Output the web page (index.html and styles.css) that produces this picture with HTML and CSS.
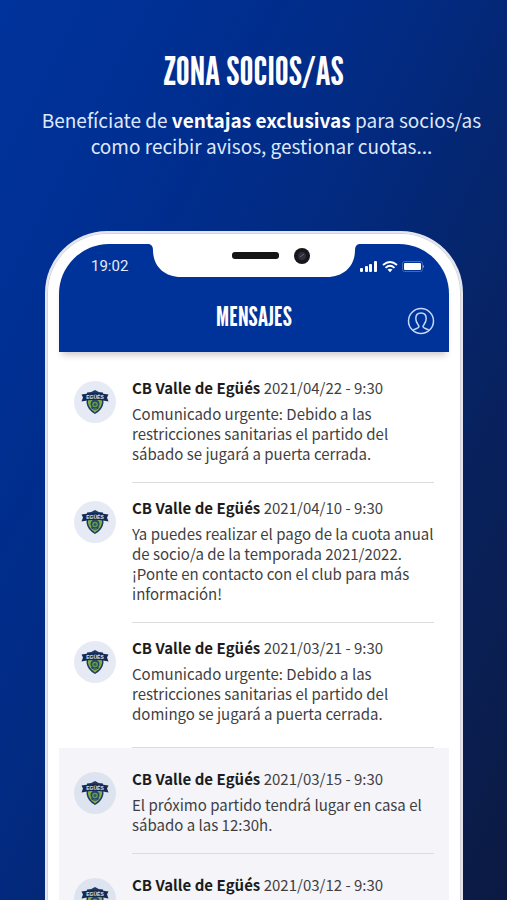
FILE: index.html
```html
<!DOCTYPE html>
<html lang="es">
<head>
    <meta charset="UTF-8">
    <meta name="viewport" content="width=device-width, initial-scale=1.0">
    <title>Zona Socios/as</title>
    <link rel="stylesheet" href="styles.css">
</head>
<body>
    <!-- Club crest, reused by every message -->
    <svg class="defs" aria-hidden="true">
        <symbol id="crest" viewBox="0 0 28 26">
            <path d="M6 3.5 Q10.5 3.5 14 1 Q17.500 3.500 22 3.500 L22.500 14 Q21.500 21 14 25 Q6.500 21 5.500 14 Z" fill="#1d3768"/>
            <path d="M7 11 H21 V14 Q20 19.500 14 23.500 Q8 19.500 7 14 Z" fill="#7fae45"/>
            <circle cx="14" cy="15" r="4.500" fill="#25466b"/>
            <circle cx="14" cy="15.500" r="2.800" fill="#6b9d50"/>
            <circle cx="14" cy="15.500" r="1.500" fill="#2f5a63"/>
            <path d="M10 18.500 Q14 22 18 18.500" stroke="#25466b" stroke-width="1" fill="none"/>
            <path d="M0.500 5.500 Q14 2.500 27.500 5.500 L26 8.500 L27.500 12.500 L22 11.500 Q14 10 6 11.500 L0.500 12.500 L2 8.500 Z" fill="#17294f"/>
            <text x="14" y="10" class="crest-text">EGÜÉS</text>
        </symbol>
    </svg>

    <section class="hero">
        <h1>ZONA SOCIOS/AS</h1>
        <p>Benefíciate de <strong>ventajas exclusivas</strong> para socios/as como recibir avisos, gestionar cuotas...</p>
    </section>

    <main class="phone">
        <div class="screen">
            <svg class="notch" viewBox="0 0 210 33" aria-hidden="true">
                <path d="M0 0 Q4 1 4 6 C4 22 15 33 32 33 H178 C195 33 206 22 206 6 Q206 1 210 0 Z" fill="#fff"/>
                <rect x="83" y="8" width="47" height="7" rx="3" fill="#141416"/>
                <circle cx="153" cy="12" r="8" fill="#17171b"/>
                <circle cx="153" cy="12" r="4" fill="#2c2e3a"/>
                <path d="M151 13 L155 10" stroke="#62697c" stroke-width="1"/>
            </svg>

            <header class="app-header">
                <div class="status-bar">
                    <span class="time">19:02</span>
                    <svg class="status-icons" viewBox="0 0 66 14" aria-hidden="true">
                        <g fill="#fff">
                            <rect x="1" y="9" width="3" height="4" rx="1"/>
                            <rect x="6" y="7" width="3" height="6" rx="1"/>
                            <rect x="10" y="5" width="3" height="8" rx="1"/>
                            <rect x="15" y="2" width="3" height="11" rx="1"/>
                            <path d="M28.500 10.500 L31 13.300 L33.500 10.500 Q31 8.900 28.500 10.500 Z"/>
                            <rect x="45" y="4" width="17" height="7" rx="1"/>
                            <path d="M64 6 Q66 7.500 64 9 Z" opacity="0.6"/>
                        </g>
                        <rect x="43.500" y="2.500" width="20" height="10" rx="2" fill="none" stroke="#4468b5" stroke-width="1"/>
                        <g fill="none" stroke="#fff" stroke-width="1.800">
                            <path d="M24 6 Q31 0 38 6"/>
                            <path d="M26.500 8.800 Q31 4.800 35.500 8.800"/>
                        </g>
                    </svg>
                </div>
                <div class="title-bar">
                    <h2>MENSAJES</h2>
                    <button class="profile-button" type="button" aria-label="Perfil">
                        <svg viewBox="0 0 28 28" aria-hidden="true">
                            <circle cx="14" cy="14" r="12.500"/>
                            <path d="M6 23.500 C7 21.500 12 21.800 12 19.500 C12 18 8.800 16.500 8.800 11.500 C8.800 7.800 11 6 14 6 C17 6 19.200 7.800 19.200 11.500 C19.200 16.500 16 18 16 19.500 C16 21.800 21 21.500 22 23.500"/>
                        </svg>
                    </button>
                </div>
            </header>

            <section class="messages">
                <article class="message">
                    <div class="avatar"><svg><use href="#crest"/></svg></div>
                    <div class="message-body">
                        <h3>CB Valle de Egüés <time>2021/04/22 - 9:30</time></h3>
                        <p>Comunicado urgente: Debido a las restricciones sanitarias el partido del sábado se jugará a puerta cerrada.</p>
                    </div>
                </article>
                <article class="message">
                    <div class="avatar"><svg><use href="#crest"/></svg></div>
                    <div class="message-body">
                        <h3>CB Valle de Egüés <time>2021/04/10 - 9:30</time></h3>
                        <p>Ya puedes realizar el pago de la cuota anual de socio/a de la temporada 2021/2022. ¡Ponte en contacto con el club para más información!</p>
                    </div>
                </article>
                <article class="message">
                    <div class="avatar"><svg><use href="#crest"/></svg></div>
                    <div class="message-body">
                        <h3>CB Valle de Egüés <time>2021/03/21 - 9:30</time></h3>
                        <p>Comunicado urgente: Debido a las restricciones sanitarias el partido del domingo se jugará a puerta cerrada.</p>
                    </div>
                </article>
            </section>

            <section class="messages read">
                <article class="message">
                    <div class="avatar"><svg><use href="#crest"/></svg></div>
                    <div class="message-body">
                        <h3>CB Valle de Egüés <time>2021/03/15 - 9:30</time></h3>
                        <p>El próximo partido tendrá lugar en casa el sábado a las 12:30h.</p>
                    </div>
                </article>
                <article class="message">
                    <div class="avatar"><svg><use href="#crest"/></svg></div>
                    <div class="message-body">
                        <h3>CB Valle de Egüés <time>2021/03/12 - 9:30</time></h3>
                    </div>
                </article>
            </section>
        </div>
    </main>
</body>
</html>
```

FILE: styles.css
```css
* {
    box-sizing: border-box;
}

body {
    margin: 0;
    height: 100vh;
    overflow: hidden;
    display: flex;
    flex-direction: column;
    background: linear-gradient(117deg, #00339c 0%, #002f92 22%, #022a80 45%, #08225f 72%, #0c1a42 100%);
    font-family: "Source Sans Pro", "Noto Sans CJK SC", sans-serif;
}

h1,
h2,
h3,
p {
    margin: 0;
}

h1,
h2 {
    font-family: "League Gothic", "Liberation Sans Narrow", "Roboto", sans-serif;
    font-weight: normal;
    color: #fff;
    white-space: nowrap;
}

.defs {
    display: none;
}

.hero {
    padding: 47px 20px 72px;
    text-align: center;
    color: #dfe8fb;
}

.hero h1 {
    font-size: 39px;
    line-height: 48px;
    margin-bottom: 12px;
}

.hero p {
    padding-left: 16px;
    font-size: 19px;
    line-height: 26px;
}

.hero strong {
    color: #fff;
}

.phone {
    flex: 1 0 auto;
    margin: 0 44px 0 45px;
    padding: 11px 12px 0;
    border: 2px solid #e4e5ee;
    border-bottom: 0;
    border-radius: 62px 62px 0 0;
    background: #fff;
    box-shadow: inset 0 0 0 1px #d3d4dc;
}

.screen {
    position: relative;
    border-radius: 50px 50px 0 0;
    background: #fff;
}

.notch {
    position: absolute;
    top: 0;
    left: 50%;
    width: 210px;
    height: 33px;
    transform: translateX(-50%);
}

.app-header {
    height: 108px;
    border-radius: 50px 50px 0 0;
    background: #003399;
    box-shadow: 0 6px 6px -3px rgba(60, 40, 60, 0.25);
}

.status-bar {
    display: flex;
    justify-content: space-between;
    align-items: center;
    height: 44px;
    padding: 0 24px 0 32px;
}

.time {
    font-family: Roboto, sans-serif;
    font-size: 15px;
    line-height: 20px;
    color: #e3ebfb;
}

.status-icons {
    width: 66px;
    height: 14px;
}

.title-bar {
    display: grid;
    grid-template-columns: 28px 1fr 28px;
    align-items: center;
    height: 60px;
    padding: 0 14px;
}

.title-bar h2 {
    grid-column: 2;
    font-size: 27px;
    line-height: 36px;
    padding-bottom: 4px;
    text-align: center;
}

.profile-button {
    width: 28px;
    height: 28px;
    margin-top: 6px;
    padding: 0;
    border: none;
    background: none;
    cursor: pointer;
}

.profile-button svg {
    display: block;
    width: 28px;
    height: 28px;
    fill: none;
    stroke: #c6d6f7;
    stroke-width: 1.5;
}

.messages {
    padding: 11px 15px 0;
}

.message {
    display: flex;
    gap: 16px;
}

.avatar {
    flex: none;
    display: flex;
    justify-content: center;
    align-items: center;
    width: 42px;
    height: 42px;
    margin-top: 18px;
    border-radius: 50%;
    background: #e6eaf5;
}

.avatar svg {
    width: 28px;
    height: 26px;
}

.crest-text {
    font-family: "Liberation Sans", sans-serif;
    font-size: 5px;
    font-weight: bold;
    text-anchor: middle;
    fill: #dfe6f0;
}

.message-body {
    flex: 1;
    padding: 15px 0 18px;
    border-bottom: 1px solid #dcdce0;
    color: #3f3f43;
    font-size: 15px;
    line-height: 20px;
}

.message-body h3 {
    font-size: 15px;
    line-height: 20px;
    margin-bottom: 6px;
    color: #1c1c20;
    white-space: nowrap;
}

.message-body time {
    font-weight: normal;
    color: #3f3f43;
}

.messages:not(.read) .message:last-child .message-body {
    padding-bottom: 23px;
}

.read {
    padding-top: 0;
    background: #f4f4f9;
}

.read .avatar {
    margin-top: 24px;
    background: #dde4ef;
}

.read .message-body {
    padding-top: 21px;
}
```
